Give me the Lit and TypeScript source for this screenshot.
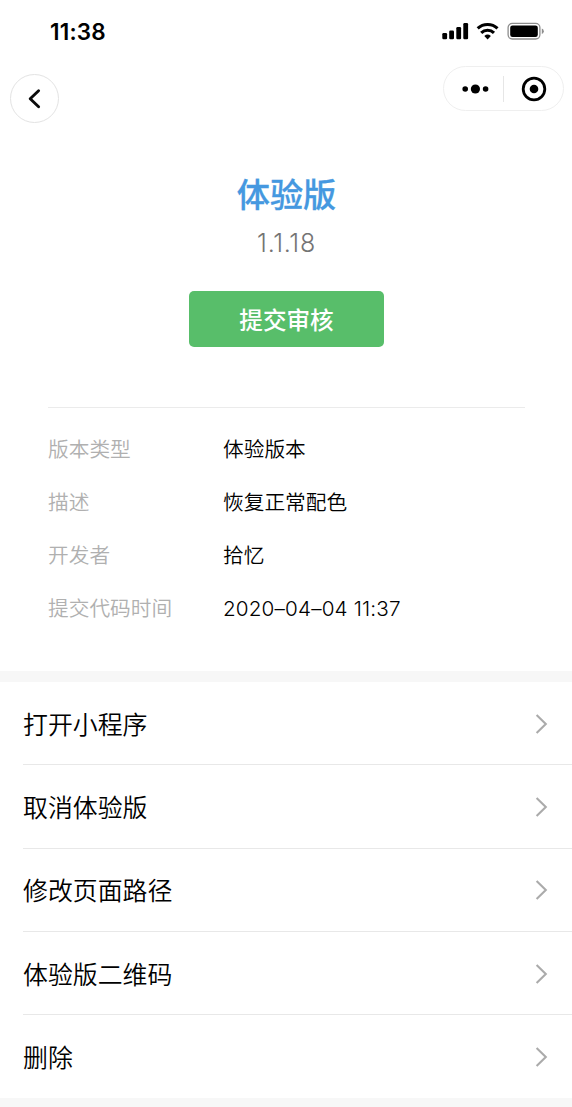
import { LitElement, html, css } from "lit";
import { customElement } from "lit/decorators.js";

const details = [
  { label: "版本类型", value: "体验版本" },
  { label: "描述", value: "恢复正常配色" },
  { label: "开发者", value: "拾忆" },
  { label: "提交代码时间", value: "2020–04–04 11:37" },
];

const actions = ["打开小程序", "取消体验版", "修改页面路径", "体验版二维码", "删除"];

@customElement("status-bar")
class StatusBar extends LitElement {
  static styles = css`
    :host {
      display: flex;
      justify-content: space-between;
      height: 62px;
      box-sizing: border-box;
      padding: 18px 27px 0 50px;
    }
    .time {
      font: 600 22.5px/27px Inter, "Liberation Sans", sans-serif;
      letter-spacing: 0.2px;
      color: #000;
    }
    svg {
      display: block;
      margin-top: 2px;
    }
  `;

  render() {
    return html`
      <span class="time">11:38</span>
      <svg width="103" height="22" viewBox="0 0 103 22">
        <rect x="0.3" y="13" width="4.8" height="6.3" rx="1.2" />
        <rect x="7.2" y="10.5" width="4.8" height="8.8" rx="1.2" />
        <rect x="14.3" y="7" width="4.8" height="12.3" rx="1.2" />
        <rect x="21.3" y="3" width="4.8" height="16.3" rx="1.2" />
        <g fill="none" stroke="#000" stroke-width="3.1">
          <path d="M35.7 8.3 A14.6 14.6 0 0 1 55.5 8.3" />
          <path d="M39.2 12.9 A9.2 9.2 0 0 1 52 12.9" />
        </g>
        <path d="M42.3 16 A5 5 0 0 1 48.9 16 L45.6 19.4 Z" />
        <rect x="66.1" y="3.4" width="31.8" height="15.6" rx="4.2" fill="none" stroke="#8d8d8d" stroke-width="1.3" />
        <rect x="68.2" y="5.4" width="27.6" height="11.6" rx="2.3" />
        <path d="M99.8 8.4 Q101.8 9.2 101.8 11.2 Q101.8 13.2 99.8 14 Z" fill="#8d8d8d" />
      </svg>
    `;
  }
}

@customElement("nav-bar")
class NavBar extends LitElement {
  static styles = css`
    :host {
      display: flex;
      justify-content: space-between;
      align-items: flex-start;
      padding: 4px 8px 0 10px;
      height: 66px;
      box-sizing: border-box;
    }
    .back {
      width: 49px;
      height: 49px;
      margin-top: 8px;
      padding: 0;
      box-sizing: border-box;
      border: 1px solid #e3e3e3;
      border-radius: 50%;
      background: #fff;
      display: grid;
      place-items: center;
    }
    .capsule {
      width: 121px;
      height: 45px;
      box-sizing: border-box;
      border: 1px solid #efefef;
      border-radius: 23px;
      background: #fff;
      display: grid;
      grid-template-columns: 1fr 1px 1fr;
      align-items: center;
      justify-items: center;
    }
    .split {
      width: 1px;
      height: 26px;
      background: #e6e6e6;
    }
    .more {
      transform: translateX(1.5px);
    }
    svg {
      display: block;
    }
  `;

  render() {
    return html`
      <button class="back" aria-label="返回">
        <svg width="24" height="24" viewBox="0 0 24 24">
          <path d="M15.6 3.8 L7.2 11.8 L15.6 19.8" fill="none" stroke="#0b0b0b" stroke-width="2.9" stroke-linecap="round" stroke-linejoin="round" />
        </svg>
      </button>
      <div class="capsule">
        <svg class="more" width="28" height="12" viewBox="0 0 28 12">
          <circle cx="3.7" cy="6" r="2.8" />
          <circle cx="13.9" cy="6" r="4.6" />
          <circle cx="24.1" cy="6" r="2.8" />
        </svg>
        <span class="split"></span>
        <svg width="26" height="26" viewBox="0 0 26 26">
          <circle cx="13" cy="13" r="10.8" fill="none" stroke="#000" stroke-width="2.8" />
          <circle cx="13" cy="13" r="4.3" />
        </svg>
      </div>
    `;
  }
}

@customElement("app-root")
class AppRoot extends LitElement {
  static styles = css`
    :host {
      display: block;
      min-height: 1107px;
      background: #f7f7f7;
      color: #000;
      font-family: Inter, "Noto Sans CJK SC", sans-serif;
    }
    .summary {
      background: #fff;
      height: 671px;
      box-sizing: border-box;
    }
    .hero {
      display: flex;
      flex-direction: column;
      align-items: center;
      padding-top: 41px;
      height: 279px;
      box-sizing: border-box;
    }
    .title {
      margin: 0;
      padding-left: 1px;
      font: 500 33.2px/48px "Noto Sans CJK SC", sans-serif;
      -webkit-text-stroke: 0.3px #4598e0;
      color: #4598e0;
    }
    .version {
      margin-top: 8px;
      padding-left: 1px;
      font: 300 25px/36px Inter, sans-serif;
      letter-spacing: 0.7px;
      color: #747474;
    }
    .submit {
      margin-top: 30px;
      width: 195px;
      height: 56px;
      padding: 0 0 0 1px;
      border: 0;
      border-radius: 5px;
      background: #58be6a;
      color: #fff;
      font: 500 23.6px/56px "Noto Sans CJK SC", sans-serif;
    }
    .details {
      margin: 0 47px 0 48px;
      padding-top: 16px;
      border-top: 1px solid #ebebeb;
    }
    .detail {
      display: grid;
      grid-template-columns: 175px 1fr;
      height: 52.75px;
      align-items: center;
      font-size: 20.7px;
      line-height: 30px;
      font-weight: 350;
    }
    .detail:last-child .value {
      letter-spacing: 0.15px;
    }
    .label {
      color: #b0b0b0;
    }
    .actions {
      margin-top: 11px;
      background: #fff;
      height: 416px;
    }
    .action {
      display: flex;
      justify-content: space-between;
      align-items: center;
      box-sizing: border-box;
      height: 83.3px;
      margin-left: 23px;
      padding: 3px 24px 0 0;
      font-size: 24.9px;
      font-weight: 350;
      line-height: 36px;
      border-bottom: 1px solid #e8e8e8;
    }
    .action:last-child {
      border-bottom-color: transparent;
    }
    .chevron {
      display: block;
    }
  `;

  render() {
    return html`
      <section class="summary">
        <status-bar></status-bar>
        <nav-bar></nav-bar>
        <div class="hero">
          <h1 class="title">体验版</h1>
          <div class="version">1.1.18</div>
          <button class="submit">提交审核</button>
        </div>
        <div class="details">
          ${details.map(
            (d) => html`<div class="detail">
              <span class="label">${d.label}</span><span class="value">${d.value}</span>
            </div>`
          )}
        </div>
      </section>
      <section class="actions">
        ${actions.map(
          (name) => html`<div class="action">
            <span>${name}</span>
            <svg class="chevron" width="13" height="22" viewBox="0 0 13 22">
              <path d="M1.6 0.9 L10.8 9.9 L1.6 18.9" fill="none" stroke="#ababab" stroke-width="2.1" />
            </svg>
          </div>`
        )}
      </section>
    `;
  }
}
